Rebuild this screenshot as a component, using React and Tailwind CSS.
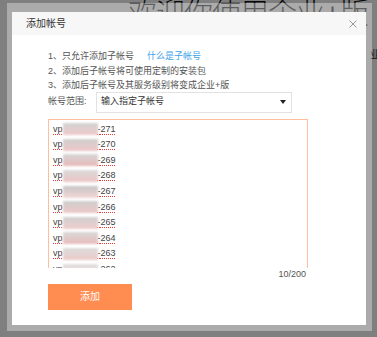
import React from 'react'

const accounts = [
  { n: 271, tone: 'from-[#d2d2d2] to-[#f0caca]' },
  { n: 270, tone: 'from-[#cfcfcf] to-[#eec6c6]' },
  { n: 269, tone: 'from-[#d6d6d6] to-[#e6b9b9]' },
  { n: 268, tone: 'from-[#dadada] to-[#ecc4c4]' },
  { n: 267, tone: 'from-[#c6c6c6] to-[#f4d6d6]' },
  { n: 266, tone: 'from-[#cdcdcd] to-[#eec8c8]' },
  { n: 265, tone: 'from-[#d0d0d0] to-[#f0cccc]' },
  { n: 264, tone: 'from-[#d8d8d8] to-[#e8bcbc]' },
  { n: 263, tone: 'from-[#dcdcdc] to-[#eccaca]' },
  { n: 262, tone: 'from-[#e0e0e0] to-[#f2d2d2]' },
]

const AccountLine = ({ n, tone }) => (
  <div className="flex items-center h-[15.6px] text-[9px] text-[#444]">
    <span className="underline decoration-dotted decoration-[#e53935] underline-offset-2">vp</span>
    <span className={`inline-block w-[35px] h-[12px] bg-gradient-to-b ${tone} blur-[1px]`} />
    <span className="underline decoration-dotted decoration-[#e53935] underline-offset-2">-{n}</span>
  </div>
)

const App = () => {
  return (
    <div
      className="relative w-[377px] h-[337px] overflow-hidden bg-white"
      style={{ fontFamily: '"Liberation Sans", "Noto Sans CJK SC", sans-serif' }}
    >
      {/* page behind the dialog */}
      <div className="pl-[128px] -mt-[7px]">
        <div className="text-[29px] font-light text-[#111] tracking-[-1px] whitespace-nowrap">
          欢迎你使用企业+版
        </div>
      </div>
      <div className="pl-[370px] pt-[10px] text-[10px] text-[#222] whitespace-nowrap">业</div>

      {/* overlay */}
      <div className="absolute inset-0 bg-black/50">
        <div className="pl-[7px] pt-[3px]">
          <div className="w-[365px] h-[328px] bg-white/35 pl-[5px] pr-[6px] pt-[9px] pb-[6px]">
            <div className="w-[354px] h-[313px] bg-white flex flex-col">
              <div className="h-[23px] bg-[#f7f7f7] flex items-center justify-between pl-[14px] pr-[8px]">
                <span className="text-[10px] text-[#333]">添加帐号</span>
                <svg width="10" height="10" viewBox="0 0 10 10" className="text-[#999]">
                  <path d="M1.5 1.5 L8.5 8.5 M8.5 1.5 L1.5 8.5" stroke="currentColor" strokeWidth="1" />
                </svg>
              </div>

              <div className="pl-[36px] pt-[14px] flex flex-col">
                <div className="flex flex-col text-[9px] text-[#555] leading-[14.5px]">
                  <div className="flex">
                    <span>1、只允许添加子帐号</span>
                    <span className="ml-[13px] text-[#3ea3ea]">什么是子帐号</span>
                  </div>
                  <div>2、添加后子帐号将可使用定制的安装包</div>
                  <div>3、添加后子帐号及其服务级别将变成企业+版</div>
                </div>

                <div className="flex items-center -mt-[1px]">
                  <span className="w-[48px] text-[9px] text-[#555]">帐号范围:</span>
                  <div className="w-[196px] h-[21px] border border-[#e2e2e2] flex items-center justify-between pl-[4px] pr-[5px]">
                    <span className="text-[9px] text-[#333]">输入指定子帐号</span>
                    <svg width="6" height="4" viewBox="0 0 6 4">
                      <path d="M0 0 H6 L3 4 Z" fill="#222" />
                    </svg>
                  </div>
                </div>

                <div className="mt-[6px] w-[260px] h-[149px] border-x border-t border-[#ffbf9f] overflow-hidden pl-[4px] pt-[2px]">
                  {accounts.map((a) => (
                    <AccountLine key={a.n} n={a.n} tone={a.tone} />
                  ))}
                </div>

                <div className="w-[258px] text-right text-[9px] leading-[12px] text-[#555]">10/200</div>

                <button className="mt-[4px] w-[84px] h-[26px] bg-[#ff8c50] text-white text-[10px] flex items-center justify-center">
                  添加
                </button>
              </div>
            </div>
          </div>
        </div>
      </div>
    </div>
  )
}

export default App
